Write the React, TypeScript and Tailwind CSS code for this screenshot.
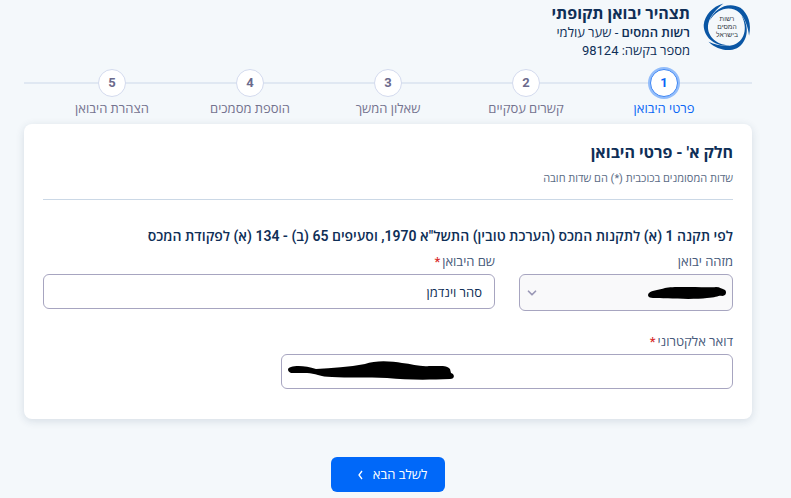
import type { JSX, ReactNode } from "react";
import { ChevronDown } from "lucide-react";

type StepProps = {
    readonly index: number;
    readonly label: string;
    readonly active: boolean;
};

type FieldProps = {
    readonly id: string;
    readonly label: string;
    readonly required?: boolean;
    readonly className: string;
    readonly children: ReactNode;
};

const STEPS = ["פרטי היבואן", "קשרים עסקיים", "שאלון המשך", "הוספת מסמכים", "הצהרת היבואן"];

// one blade of the swirl, drawn three times around the centre
const BLADE = "M6 17C11 4 26 -3 38 4C46 10 50 21 47 33C46 24 43 15 37 9C28 1 14 4 6 17Z";

const Logo = (): JSX.Element => (
    <svg width="46" height="46" viewBox="0 0 48 48" className="shrink-0 overflow-visible" role="img" aria-label="רשות המסים בישראל">
        <g fill="#0a56a4">
            <path d={BLADE} />
            <path d={BLADE} transform="rotate(120 24 24)" />
            <path d={BLADE} transform="rotate(240 24 24)" />
        </g>
        <g fill="#33393f" fontSize="7" textAnchor="middle" fontFamily="Liberation Sans, sans-serif">
            <text x="24" y="18">רשות</text>
            <text x="24" y="26">המסים</text>
            <text x="24" y="34">בישראל</text>
        </g>
    </svg>
);

const Step = ({ index, label, active }: StepProps): JSX.Element => (
    <li className="flex flex-col items-center gap-0.5" aria-current={active ? "step" : undefined}>
        <span
            className={
                active
                    ? "flex size-7 items-center justify-center rounded-full border border-[#3d86f5] bg-white text-[13px] font-bold text-[#0a66f5] ring-2 ring-[#93bdfa]"
                    : "flex size-7 items-center justify-center rounded-full border border-[#d3daee] bg-white text-[13px] font-bold text-[#6b6a8c]"
            }
        >
            {index}
        </span>
        <span className={active ? "text-[13px] leading-5 text-[#0a66f5]" : "text-[13px] leading-5 text-[#74738f]"}>
            {label}
        </span>
    </li>
);

const Field = ({ id, label, required, className, children }: FieldProps): JSX.Element => (
    <div className={className}>
        <label htmlFor={id} className="block text-[13px] leading-5 font-medium text-[#46597a]">
            {label}
            {required && <span className="ms-0.5 text-[#d92f2f]">*</span>}
        </label>
        <div className="relative mt-0.5">{children}</div>
    </div>
);

export default function App(): JSX.Element {
    return (
        <div
            dir="rtl"
            className="min-h-screen bg-[#f4f8fb] pr-[39px] pb-1.5 pl-6 font-[Roboto,'Open_Sans',sans-serif] text-[#0f2f57]"
        >
            <header className="flex items-start gap-3.5 px-0.5 pt-1">
                <Logo />
                <div>
                    <h1 className="text-[16px] leading-5 font-bold">תצהיר יבואן תקופתי</h1>
                    <p className="text-[13px] leading-[18px]">
                        <strong className="font-semibold">רשות המסים</strong> - שער עולמי
                    </p>
                    <p className="text-[13px] leading-[18px]">מספר בקשה: 98124</p>
                </div>
            </header>

            <nav className="relative mt-[9px]">
                <div className="absolute inset-x-0 top-[13px] h-0.5 bg-[#e0e8f2]" />
                <ol className="relative grid grid-cols-5 px-[19px]">
                    {STEPS.map((label, i) => (
                        <Step key={label} index={i + 1} label={label} active={i === 0} />
                    ))}
                </ol>
            </nav>

            <main className="mt-[5px] rounded-lg bg-white px-[19px] pt-[17px] pb-[30px] shadow-[0_2px_8px_rgba(30,60,90,0.14)]">
                <div className="border-b border-[#cbd8e6] pb-2.5">
                    <h2 className="text-[16px] leading-6 font-bold">חלק א' - פרטי היבואן</h2>
                    <p className="mt-1 text-[11px] leading-5 text-[#5a6b85]">שדות המסומנים בכוכבית (*) הם שדות חובה</p>
                </div>

                <form className="pt-6">
                    <h3 className="text-[14px] leading-6 font-semibold">
                        לפי תקנה 1 (א) לתקנות המכס (הערכת טובין) התשל"א 1970, וסעיפים 65 (ב) - 134 (א) לפקודת המכס
                    </h3>
                    <div className="mt-1 grid grid-cols-12 gap-x-6 gap-y-[21px]">
                        <Field id="importer-id" label="מזהה יבואן" className="col-span-4">
                            <select
                                id="importer-id"
                                className="h-[37px] w-full appearance-none rounded-md border border-[#a7a5c0] bg-[#f9f9fa] px-3 text-[13px]"
                            />
                            <ChevronDown
                                size={14}
                                strokeWidth={3}
                                className="pointer-events-none absolute top-3 left-1.5 text-[#9a98b6]"
                            />
                            <svg
                                width="80"
                                height="14"
                                viewBox="0 0 80 14"
                                className="pointer-events-none absolute top-3 right-1.5"
                                aria-hidden="true"
                            >
                                <path d="M2 7C5 4 12 4 18 2C28 0 60 2 69 1C73 1 75 3 78 4C80 6 79 10 75 10C72 9 69 12 60 12C45 14 15 12 6 12C1 12 0 9 2 7Z" />
                            </svg>
                        </Field>
                        <Field id="importer-name" label="שם היבואן" required className="col-span-8">
                            <input
                                id="importer-name"
                                type="text"
                                defaultValue="סהר וינדמן"
                                className="h-[35px] w-full rounded-md border border-[#a7a5c0] bg-white px-3 text-[13px]"
                            />
                        </Field>
                        <Field id="email" label="דואר אלקטרוני" required className="col-span-8">
                            <input
                                id="email"
                                type="email"
                                dir="ltr"
                                className="h-[35px] w-full rounded-md border border-[#a7a5c0] bg-white px-3 text-[13px]"
                            />
                            <svg
                                width="168"
                                height="20"
                                viewBox="0 0 168 20"
                                className="pointer-events-none absolute top-[7px] left-1.5"
                                aria-hidden="true"
                            >
                                <path d="M4 6C10 4 20 5 29 8C45 7 62 6 78 3C88 -1 105 0 115 2C125 3 134 6 142 5C154 5 160 4 163 8L164 12C168 13 168 18 163 18C140 19 120 19 100 17C80 16 60 17 45 16C33 16 28 12 20 12C12 12 7 12 4 12C0 10 0 7 4 6Z" />
                            </svg>
                        </Field>
                    </div>
                </form>
            </main>

            <div className="mt-[38px] flex justify-center">
                <button
                    type="button"
                    className="flex h-[35px] items-center gap-2.5 rounded-md bg-[#0068f9] pr-[18px] pl-[27px] text-[13px] text-white"
                >
                    לשלב הבא
                    <svg width="5" height="10" viewBox="0 0 5 10" fill="none" aria-hidden="true">
                        <path d="M4 1L1 5L4 9" stroke="currentColor" strokeWidth="1.3" />
                    </svg>
                </button>
            </div>
        </div>
    );
}
